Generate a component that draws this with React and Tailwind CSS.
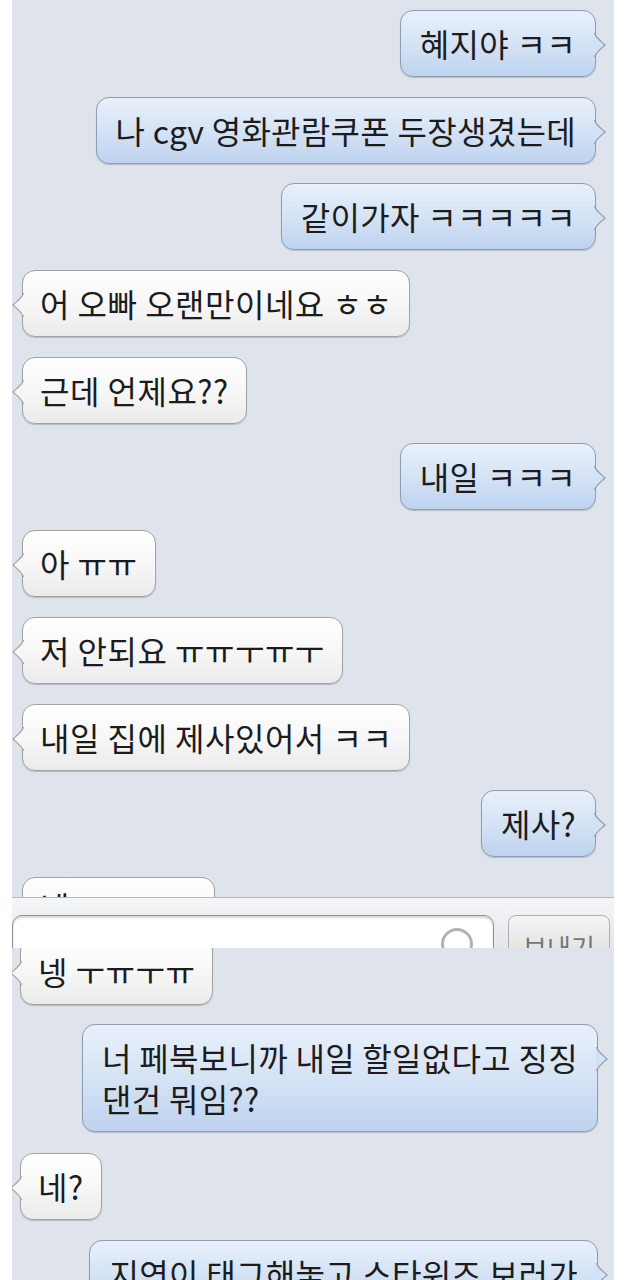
import React from "react";

const FONT = { fontFamily: '"Noto Sans CJK KR", "Noto Sans", sans-serif' };

function TailRight() {
  return (
    <svg
      className="absolute right-[-11px] top-[22px]"
      width="12"
      height="24"
      viewBox="0 0 12 24"
    >
      <path d="M0 0 C2 5 8 9 11 12 C8 15 2 19 0 24 Z" fill="#d3e1f4" />
      <path d="M0.5 0 C2 5 8 9 11 12 C8 15 2 19 0.5 24" fill="none" stroke="#8c9db4" strokeWidth="1.2" />
    </svg>
  );
}

function TailLeft() {
  return (
    <svg
      className="absolute left-[-11px] top-[22px]"
      width="12"
      height="24"
      viewBox="0 0 12 24"
    >
      <path d="M12 0 C10 5 4 9 1 12 C4 15 10 19 12 24 Z" fill="#f6f6f6" />
      <path d="M11.5 0 C10 5 4 9 1 12 C4 15 10 19 11.5 24" fill="none" stroke="#a3a3a3" strokeWidth="1.2" />
    </svg>
  );
}

function Sent({ children, className = "" }) {
  return (
    <div className={"flex justify-end pr-[18px] shrink-0 " + className}>
      <div className="relative rounded-[13px] border border-[#8c9db4] bg-gradient-to-b from-[#e9f0fb] via-[#d5e3f5] to-[#bed3ef] px-[19px] py-[12px] text-[32px] tracking-[0.3px] leading-[41px] text-[#1c1c1c] shadow-[0_1px_1px_rgba(0,0,0,0.18)] whitespace-nowrap">
        {children}
        <TailRight />
      </div>
    </div>
  );
}

function Recv({ children, className = "" }) {
  return (
    <div className={"flex justify-start pl-[10px] shrink-0 " + className}>
      <div className="relative rounded-[13px] border border-[#a3a3a3] bg-gradient-to-b from-[#ffffff] via-[#f7f7f7] to-[#ebebeb] px-[17px] py-[12px] text-[32px] tracking-[0.5px] leading-[41px] text-[#1c1c1c] shadow-[0_1px_1px_rgba(0,0,0,0.18)] whitespace-nowrap">
        {children}
        <TailLeft />
      </div>
    </div>
  );
}

export default function App() {
  return (
    <div className="w-[640px] h-[1280px] bg-white overflow-hidden" style={FONT}>
      {/* top screenshot */}
      <div className="ml-[12px] w-[602px] h-[897px] bg-[#dfe3ec] overflow-hidden flex flex-col gap-[19.7px] pt-[10px]">
        <Sent>혜지야 ㅋㅋ</Sent>
        <Sent>나 cgv 영화관람쿠폰 두장생겼는데</Sent>
        <Sent>같이가자 ㅋㅋㅋㅋㅋ</Sent>
        <Recv>어 오빠 오랜만이네요 ㅎㅎ</Recv>
        <Recv>근데 언제요??</Recv>
        <Sent>내일 ㅋㅋㅋ</Sent>
        <Recv>아 ㅠㅠ</Recv>
        <Recv>저 안되요 ㅠㅠㅜㅠㅜ</Recv>
        <Recv>내일 집에 제사있어서 ㅋㅋ</Recv>
        <Sent>제사?</Sent>
        <Recv className="[&>div]:!pt-[8px]">넹 ㅜㅠㅜㅠ</Recv>
      </div>

      {/* input bar */}
      <div className="ml-[12px] w-[602px] h-[51px] overflow-hidden border-t border-[#b4b8c0] bg-gradient-to-b from-[#f5f6f8] to-[#e4e6ea] flex items-start gap-[14px] pt-[17px]">
        <div className="relative w-[482px] h-[50px] shrink-0 rounded-t-[10px] border border-[#8e8e8e] bg-white shadow-[inset_0_2px_2px_rgba(0,0,0,0.15)]">
          <div className="absolute left-[428px] top-[12px] w-[32px] h-[32px] rounded-full border-[3px] border-[#b3b3b3]" />
        </div>
        <div className="w-[102px] h-[50px] shrink-0 rounded-t-[8px] border border-[#b0b0b0] bg-gradient-to-b from-[#f4f4f4] to-[#dedede] flex justify-center">
          <span className="mt-[16px] text-[26px] leading-[30px] text-[#777]">보내기</span>
        </div>
      </div>

      {/* bottom screenshot */}
      <div className="ml-[12px] w-[602px] h-[332px] bg-[#dfe3ec] overflow-hidden flex flex-col">
        <Recv className="-mt-[10px] !pl-[8px]">넹 ㅜㅠㅜㅠ</Recv>
        <Sent className="mt-[19px] !pr-[16px]">
          너 페북보니까 내일 할일없다고 징징
          <br />
          댄건 뭐임??
        </Sent>
        <Recv className="mt-[21px] !pl-[8px]">네?</Recv>
        <Sent className="mt-[20px] !pr-[16px]">지연이 태그해놓고 스타워즈 보러가</Sent>
      </div>
    </div>
  );
}
